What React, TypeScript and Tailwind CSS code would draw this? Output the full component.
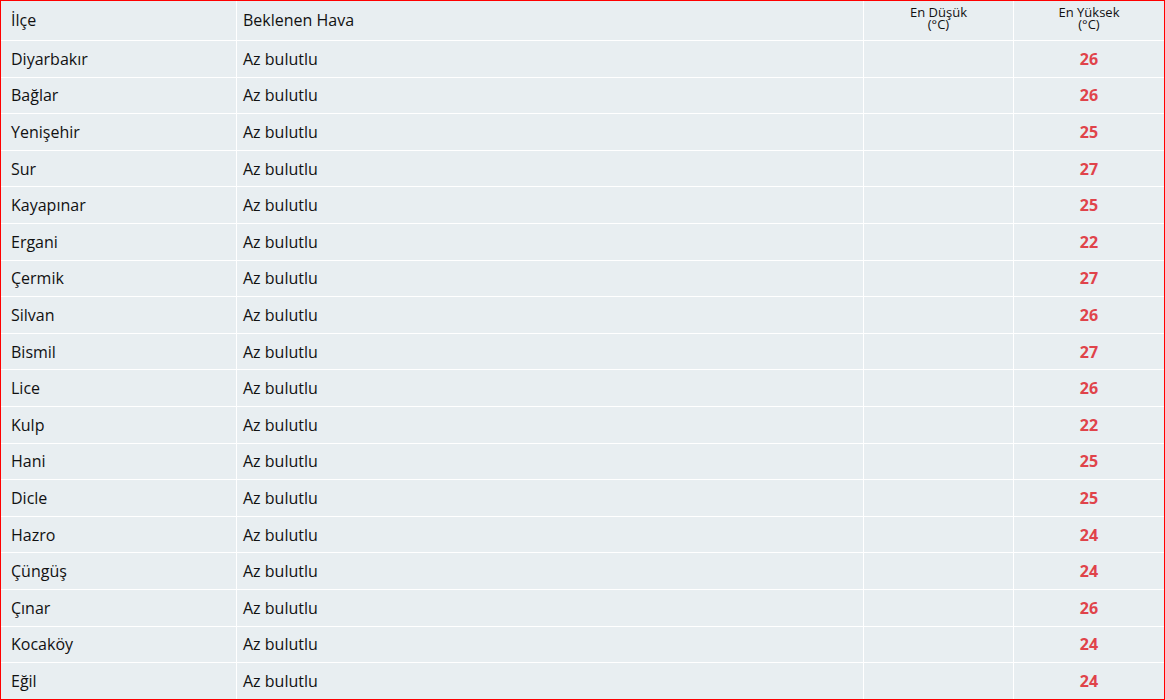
const rows: [string, number][] = [
  ["Diyarbakır", 26],
  ["Bağlar", 26],
  ["Yenişehir", 25],
  ["Sur", 27],
  ["Kayapınar", 25],
  ["Ergani", 22],
  ["Çermik", 27],
  ["Silvan", 26],
  ["Bismil", 27],
  ["Lice", 26],
  ["Kulp", 22],
  ["Hani", 25],
  ["Dicle", 25],
  ["Hazro", 24],
  ["Çüngüş", 24],
  ["Çınar", 26],
  ["Kocaköy", 24],
  ["Eğil", 24],
];

export default function App() {
  return (
    <div
      className="w-[1165px] h-[700px] border border-[#ff0000] bg-white overflow-hidden text-[#111]"
      style={{ fontFamily: '"Open Sans", "Noto Sans", sans-serif' }}
    >
      <table className="table-fixed border-separate border-spacing-0 w-[1163px]">
        <colgroup>
          <col className="w-[236px]" />
          <col className="w-[627px]" />
          <col className="w-[150px]" />
          <col className="w-[150px]" />
        </colgroup>
        <thead>
          <tr className="h-[40px]">
            <th className="bg-[#e8eef1] border-r border-b border-white text-left font-normal text-base pl-[10px] pb-[2px]">
              İlçe
            </th>
            <th className="bg-[#e8eef1] border-r border-b border-white text-left font-normal text-base pl-[6px] pb-[2px]">
              Beklenen Hava
            </th>
            <th className="bg-[#e8eef1] border-r border-b border-white text-center font-normal text-[13px] leading-[12px] align-top pt-[5px]">
              <div>En Düşük</div>
              <div>(°C)</div>
            </th>
            <th className="bg-[#e8eef1] border-b border-white text-center font-normal text-[13px] leading-[12px] align-top pt-[5px]">
              <div>En Yüksek</div>
              <div>(°C)</div>
            </th>
          </tr>
        </thead>
        <tbody>
          {rows.map(([name, max], i) => {
            const last = i === rows.length - 1;
            return (
              <tr key={name} className="h-[36.6px]">
                <td className={"bg-[#e8eef1] border-r border-white pl-[10px] text-base " + (last ? "" : "border-b")}>
                  {name}
                </td>
                <td className={"bg-[#e8eef1] border-r border-white pl-[6px] text-base " + (last ? "" : "border-b")}>
                  Az bulutlu
                </td>
                <td className={"bg-[#e8eef1] border-r border-white " + (last ? "" : "border-b")}></td>
                <td className={"bg-[#e8eef1] border-white text-center font-bold text-base text-[#e0434a] " + (last ? "" : "border-b")}>
                  {max}
                </td>
              </tr>
            );
          })}
        </tbody>
      </table>
    </div>
  );
}
